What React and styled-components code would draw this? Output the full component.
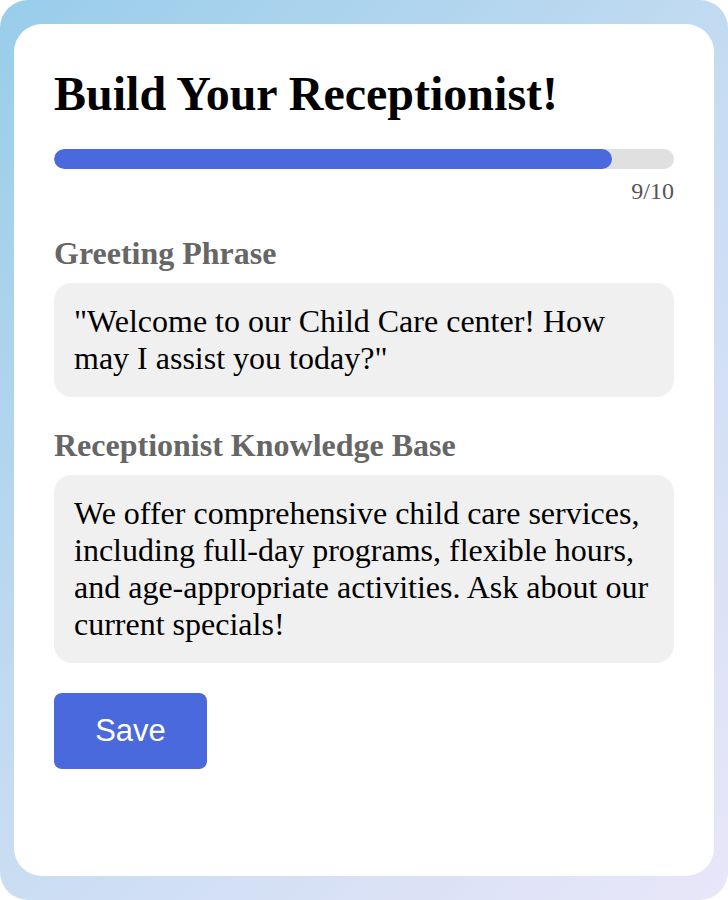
import React from "react";
import styled, { createGlobalStyle } from "styled-components";

const GlobalStyle = createGlobalStyle`
  html, body {
    margin: 0;
    padding: 0;
    background: #ffffff;
  }
  * {
    box-sizing: border-box;
  }
`;

const Page = styled.div`
  width: 728px;
  height: 900px;
  padding: 24px 14px;
  border-radius: 28px;
  background: linear-gradient(135deg, #98cdea 0%, #c6dcf2 50%, #e9e6f9 100%);
  display: flex;
  font-family: "Liberation Serif", "Times New Roman", serif;
`;

const Card = styled.div`
  flex: 1;
  background: #ffffff;
  border-radius: 28px;
  padding: 42px 40px 40px;
  display: flex;
  flex-direction: column;
`;

const Title = styled.h1`
  margin: 0 0 28px;
  font-size: 48px;
  font-weight: bold;
  line-height: normal;
  color: #000;
`;

const Track = styled.div`
  height: 20px;
  border-radius: 10px;
  background: #e0e0e0;
  overflow: hidden;
`;

const Fill = styled.div`
  height: 100%;
  border-radius: 10px;
  background: #4a69dc;
`;

const Counter = styled.div`
  margin-top: 9px;
  text-align: right;
  font-size: 24px;
  line-height: normal;
  color: #555;
`;

const Section = styled.div`
  margin-top: 30px;
`;

const Label = styled.div`
  font-size: 32px;
  font-weight: bold;
  color: #666;
  line-height: normal;
  margin-bottom: 11px;
`;

const TextBox = styled.div`
  background: #f0f0f0;
  border-radius: 18px;
  padding: 20px;
  font-size: 32px;
  line-height: normal;
  color: #000;
`;

const SaveButton = styled.button`
  align-self: flex-start;
  margin-top: 30px;
  width: 153px;
  height: 76px;
  border: none;
  border-radius: 8px;
  background: #4a69dc;
  color: #fff;
  font-family: "Liberation Sans", Arial, sans-serif;
  font-size: 31px;
  cursor: pointer;
`;

export default function App() {
  const step = 9;
  const total = 10;
  const fields = [
    {
      label: "Greeting Phrase",
      value:
        '"Welcome to our Child Care center! How may I assist you today?"',
    },
    {
      label: "Receptionist Knowledge Base",
      value:
        "We offer comprehensive child care services, including full-day programs, flexible hours, and age-appropriate activities. Ask about our current specials!",
    },
  ];

  return (
    <>
      <GlobalStyle />
      <Page>
        <Card>
          <Title>Build Your Receptionist!</Title>
          <Track>
            <Fill style={{ width: `${(step / total) * 100}%` }} />
          </Track>
          <Counter>
            {step}/{total}
          </Counter>
          {fields.map((f) => (
            <Section key={f.label}>
              <Label>{f.label}</Label>
              <TextBox>{f.value}</TextBox>
            </Section>
          ))}
          <SaveButton>Save</SaveButton>
        </Card>
      </Page>
    </>
  );
}
